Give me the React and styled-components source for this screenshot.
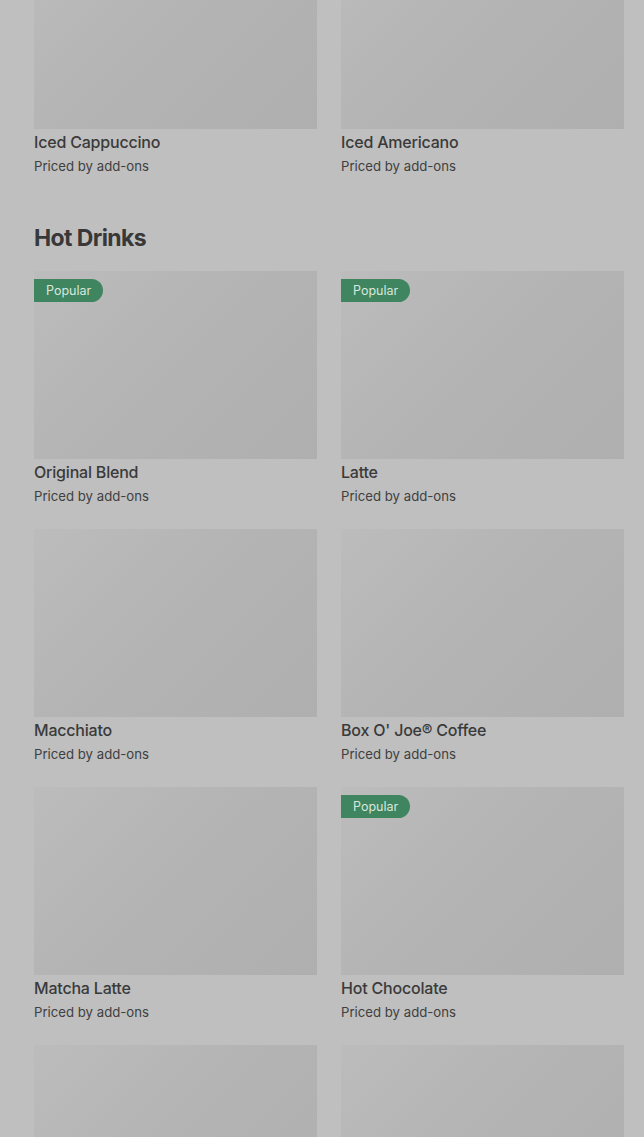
import styled, { createGlobalStyle } from "styled-components";

const GlobalStyle = createGlobalStyle`
    html, body {
        margin: 0;
        padding: 0;
        background: #bfbfbf;
        overflow: hidden;
    }
    * {
        box-sizing: border-box;
    }
`;

const icedDrinks = [
    { name: "Iced Cappuccino" },
    { name: "Iced Americano" },
];

const hotDrinks = [
    { name: "Original Blend", popular: true },
    { name: "Latte", popular: true },
    { name: "Macchiato" },
    { name: "Box O' Joe® Coffee" },
    { name: "Matcha Latte" },
    { name: "Hot Chocolate", popular: true },
    { name: "Cappuccino" },
    { name: "Americano" },
];

function Card({ item }) {
    return (
        <Item>
            <Photo>
                {item.popular && <Badge>Popular</Badge>}
            </Photo>
            <Name>{item.name}</Name>
            <Price>Priced by add-ons</Price>
        </Item>
    );
}

export default function App() {
    return (
        <Page>
            <GlobalStyle />
            <Section $offset>
                <Grid>
                    {icedDrinks.map((d) => <Card key={d.name} item={d} />)}
                </Grid>
            </Section>
            <Section>
                <Heading>Hot Drinks</Heading>
                <Grid>
                    {hotDrinks.map((d) => <Card key={d.name} item={d} />)}
                </Grid>
            </Section>
        </Page>
    );
}

const Page = styled.div`
    width: 100%;
    height: 100vh;
    overflow: hidden;
    background: #bfbfbf;
    font-family: Inter, "Noto Sans", sans-serif;
    padding: 0 20px 0 34px;
`;

const Section = styled.section`
    margin-top: ${(p) => (p.$offset ? "-59px" : "45px")};
`;

const Heading = styled.h2`
    margin: 0 0 17px;
    font-size: 23px;
    line-height: 32px;
    font-weight: 700;
    letter-spacing: -0.6px;
    color: #383838;
`;

const Grid = styled.div`
    display: grid;
    grid-template-columns: 1fr 1fr;
    column-gap: 24px;
    row-gap: 22px;
`;

const Item = styled.div`
    display: flex;
    flex-direction: column;
`;

const Photo = styled.div`
    position: relative;
    height: 188px;
    background: linear-gradient(135deg, #bcbcbc 0%, #b4b4b4 45%, #afafaf 100%);
`;

const Badge = styled.span`
    position: absolute;
    top: 8px;
    left: 0;
    height: 23px;
    padding: 0 12px;
    display: flex;
    align-items: center;
    background: #3f8560;
    color: #d9e7de;
    font-size: 12.5px;
    border-radius: 0 12px 12px 0;
`;

const Name = styled.div`
    margin-top: 2px;
    font-size: 16px;
    line-height: 22px;
    font-weight: 500;
    letter-spacing: -0.2px;
    color: #3a3a3a;
`;

const Price = styled.div`
    margin-top: 2px;
    font-size: 13.2px;
    line-height: 22px;
    color: #404040;
`;
